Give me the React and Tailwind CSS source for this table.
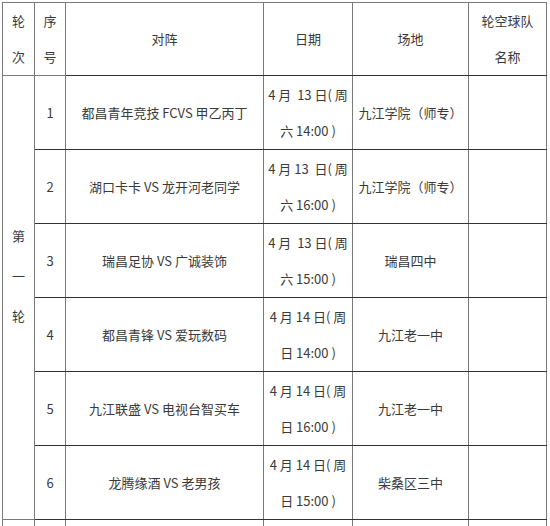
import React from "react";

const rows = [
  { n: "1", m: "都昌青年竞技 FCVS 甲乙丙丁", d1: "4 月  13 日( 周", d2: "六 14:00 )", v: "九江学院（师专）" },
  { n: "2", m: "湖口卡卡 VS 龙开河老同学", d1: "4 月 13  日( 周", d2: "六 16:00 )", v: "九江学院（师专）" },
  { n: "3", m: "瑞昌足协 VS 广诚装饰", d1: "4 月  13 日( 周", d2: "六 15:00 )", v: "瑞昌四中" },
  { n: "4", m: "都昌青锋 VS 爱玩数码", d1: "4 月 14 日( 周", d2: "日 14:00 )", v: "九江老一中" },
  { n: "5", m: "九江联盛 VS 电视台智买车", d1: "4 月 14 日( 周", d2: "日 16:00 )", v: "九江老一中" },
  { n: "6", m: "龙腾缘酒 VS 老男孩", d1: "4 月 14 日( 周", d2: "日 15:00 )", v: "柴桑区三中" },
];

const cell = "border border-[#7a7a7a] text-center align-middle p-0";

export default function App() {
  return (
    <div
      className="w-[550px] h-[526px] overflow-hidden bg-white text-[#3a3a3a] text-[13px]"
      style={{ fontFamily: '"Microsoft YaHei", "Noto Sans CJK SC", "Noto Sans", sans-serif' }}
    >
      <table className="ml-[2px] mt-[2px] table-fixed border-collapse w-[544px]">
        <colgroup>
          <col className="w-[32px]" />
          <col className="w-[31px]" />
          <col className="w-[198px]" />
          <col className="w-[89px]" />
          <col className="w-[116px]" />
          <col className="w-[78px]" />
        </colgroup>
        <thead>
          <tr className="h-[73px]">
            <th className={`${cell} font-normal leading-[36px]`}>
              <div>轮</div>
              <div>次</div>
            </th>
            <th className={`${cell} font-normal leading-[36px]`}>
              <div>序</div>
              <div>号</div>
            </th>
            <th className={`${cell} font-normal border-b-[#333]`}>对阵</th>
            <th className={`${cell} font-normal border-b-[#333]`}>日期</th>
            <th className={`${cell} font-normal border-b-[#333]`}>场地</th>
            <th className={`${cell} font-normal leading-[36px] border-b-[#333]`}>
              <div>轮空球队</div>
              <div>名称</div>
            </th>
          </tr>
        </thead>
        <tbody>
          {rows.map((r, i) => (
            <tr key={r.n} className="h-[74px]">
              {i === 0 && (
                <td rowSpan={6} className={cell}>
                  <div className="flex flex-col items-center pb-[44px]">
                    <div className="h-[40px] flex items-center">第</div>
                    <div className="h-[40px] flex items-center">一</div>
                    <div className="h-[40px] flex items-center">轮</div>
                  </div>
                </td>
              )}
              <td className={`${cell} border-b-[#333]`}>{r.n}</td>
              <td className={`${cell} border-b-[#333] whitespace-nowrap`}>{r.m}</td>
              <td className={`${cell} border-b-[#333] leading-[36px] whitespace-pre`}>
                <div>{r.d1}</div>
                <div>{r.d2}</div>
              </td>
              <td className={`${cell} border-b-[#333] whitespace-nowrap`}>{r.v}</td>
              <td className={`${cell} border-b-[#333]`}></td>
            </tr>
          ))}
          <tr className="h-[74px]">
            <td className={cell}></td>
            <td className={cell}></td>
            <td className={cell}></td>
            <td className={cell}></td>
            <td className={cell}></td>
            <td className={cell}></td>
          </tr>
        </tbody>
      </table>
    </div>
  );
}
